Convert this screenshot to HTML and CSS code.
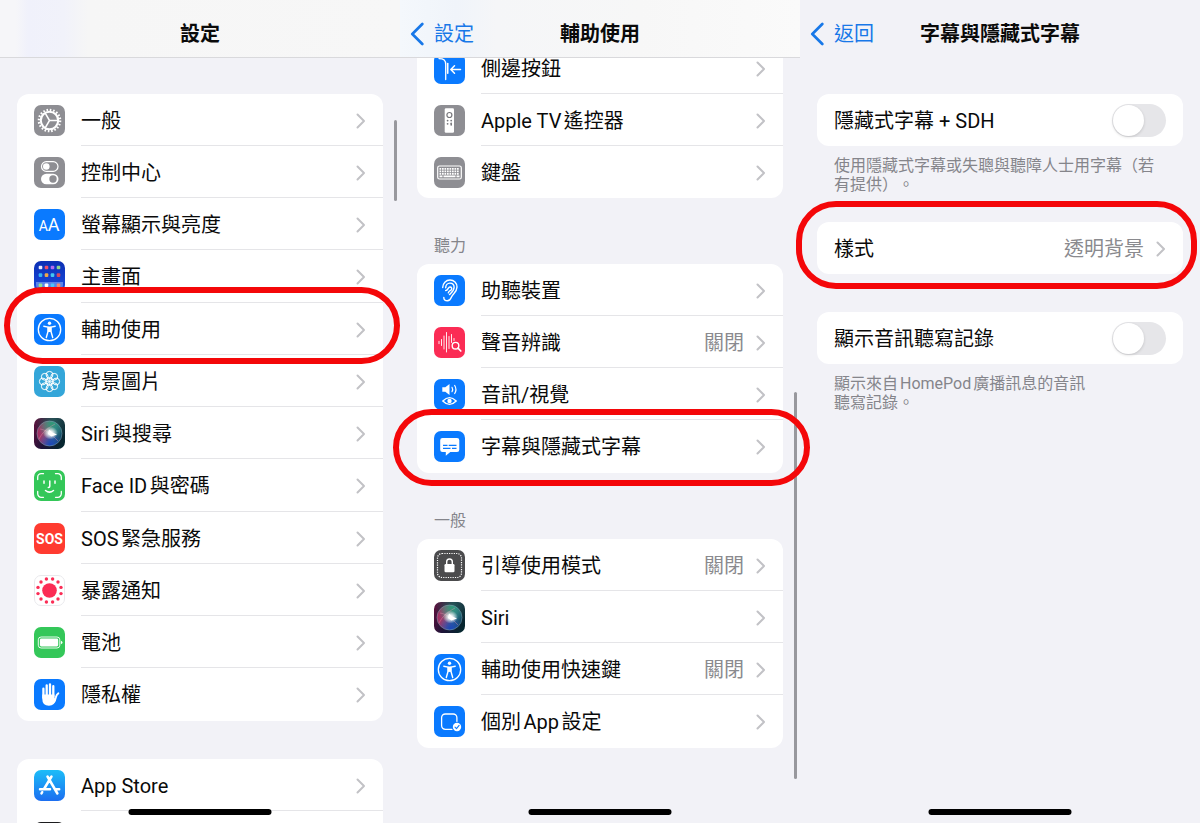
FILE: index.html
```html
<!DOCTYPE html>
<html lang="zh-Hant">
<head>
<meta charset="utf-8">
<meta name="viewport" content="width=device-width, initial-scale=1">
<title>設定</title>
<link rel="stylesheet" href="styles.css">
</head>
<body>
<svg class="sprite" aria-hidden="true">
  <defs>
    <linearGradient id="g-home" x1="0" y1="0" x2="0" y2="1"><stop offset="0" stop-color="#0b2fb4"/><stop offset="1" stop-color="#1b4be0"/></linearGradient>
    <linearGradient id="g-store" x1="0" y1="0" x2="0" y2="1"><stop offset="0" stop-color="#1cbdf8"/><stop offset="1" stop-color="#1c6ef0"/></linearGradient>
    <linearGradient id="g-siri" x1="0" y1="0.2" x2="1" y2="0.6"><stop offset="0" stop-color="#5a0f3c"/><stop offset="0.5" stop-color="#1c1438"/><stop offset="1" stop-color="#06262f"/></linearGradient>
    <linearGradient id="g-orb" x1="0" y1="0.4" x2="1" y2="0.6"><stop offset="0" stop-color="#c8306a"/><stop offset="0.4" stop-color="#b0608c"/><stop offset="0.65" stop-color="#3a80b0"/><stop offset="1" stop-color="#12506e"/></linearGradient>
    <radialGradient id="g-green" cx="0.6" cy="0.1" r="0.6"><stop offset="0" stop-color="#2f9a78"/><stop offset="1" stop-color="#2f9a78" stop-opacity="0"/></radialGradient>
    <radialGradient id="g-blue" cx="0.55" cy="0.95" r="0.5"><stop offset="0" stop-color="#1c46b8"/><stop offset="1" stop-color="#1c46b8" stop-opacity="0"/></radialGradient>
    <radialGradient id="g-glow"><stop offset="0" stop-color="#fff"/><stop offset="0.35" stop-color="#fff" stop-opacity="0.8"/><stop offset="1" stop-color="#fff" stop-opacity="0"/></radialGradient>
  </defs>
  <symbol id="chevron" viewBox="0 0 10 16"><path d="M1.500 1.500 8 8l-6.500 6.500" fill="none" stroke="#c2c2c6" stroke-width="2" stroke-linecap="round" stroke-linejoin="round"/></symbol>
  <symbol id="back" viewBox="0 0 14 24"><path d="M12.300 2 2.300 12l10 10" fill="none" stroke="#1878e8" stroke-width="2.700" stroke-linecap="round" stroke-linejoin="round"/></symbol>
  <symbol id="access" viewBox="0 0 31 31">
    <rect width="31" height="31" rx="7" fill="#0a7aff"/>
    <circle cx="15.500" cy="15.500" r="11.200" fill="none" stroke="#fff" stroke-width="1.300"/>
    <circle cx="15.500" cy="9.200" r="1.700" fill="#fff"/>
    <path d="M9.800 12.200 14 13.100v4.400l-1.700 6M21.200 12.200 17 13.100v4.400l1.700 6" fill="none" stroke="#fff" stroke-width="1.400" stroke-linecap="round" stroke-linejoin="round"/>
    <path d="M13.700 12.500h3.600v5.400h-3.600z" fill="#fff"/>
  </symbol>
  <symbol id="siri" viewBox="0 0 31 31">
    <rect width="31" height="31" rx="7" fill="url(#g-siri)"/>
    <rect width="31" height="31" rx="7" fill="url(#g-green)" opacity="0.500"/>
    <circle cx="15.500" cy="15.500" r="12.500" fill="url(#g-orb)" opacity="0.750"/>
    <circle cx="15.500" cy="15.500" r="12.500" fill="url(#g-green)"/>
    <circle cx="15.500" cy="15.500" r="12.500" fill="url(#g-blue)"/>
    <circle cx="15.500" cy="15.500" r="12.500" fill="none" stroke="#7fa8b8" stroke-width="0.700" opacity="0.700"/>
    <path d="M5 21C8 15 12 11 21 6M6 11c6 1 10 4 18 12" fill="none" stroke="#ff9ab8" stroke-width="1" opacity="0.350"/>
    <ellipse cx="16.500" cy="15" rx="7.500" ry="6.500" fill="url(#g-glow)"/>
    <path d="M15 11.500 18.500 14.500l4.500 2-5.500 2-3.500-2.500z" fill="#fff"/>
  </symbol>
</svg>

<main class="board">
  <section class="screen" aria-label="設定">
    <header class="bar bar-root"><h1 class="bar-title">設定</h1></header>
    <div class="content">
      <ul class="card">
        <li class="row">
          <svg class="icon" viewBox="0 0 31 31"><rect width="31" height="31" rx="7" fill="#8e8e93"/><g fill="none" stroke="#fff"><circle cx="15.500" cy="15.500" r="8.700" stroke-width="2.100"/><circle cx="15.500" cy="15.500" r="10.700" stroke-width="2.200" stroke-dasharray="1.600 1.760"/><path d="M15.500 15.500h8.500M15.500 15.500l-4.300-7.400M15.500 15.500l-4.300 7.400" stroke-width="1.500"/></g></svg>
          <a class="row-body" href="#"><span class="label">一般</span><svg class="chevron"><use href="#chevron"/></svg></a>
        </li>
        <li class="row">
          <svg class="icon" viewBox="0 0 31 31"><rect width="31" height="31" rx="7" fill="#8e8e93"/><rect x="7.500" y="4.700" width="16.500" height="9.600" rx="4.800" fill="none" stroke="#fff" stroke-width="1.200"/><circle cx="12.300" cy="9.500" r="3.300" fill="#fff"/><rect x="7" y="16.700" width="17.500" height="10.600" rx="5.300" fill="#fff"/><circle cx="19" cy="22" r="3.700" fill="#8e8e93"/></svg>
          <a class="row-body" href="#"><span class="label">控制中心</span><svg class="chevron"><use href="#chevron"/></svg></a>
        </li>
        <li class="row">
          <svg class="icon" viewBox="0 0 31 31"><rect width="31" height="31" rx="7" fill="#0a7aff"/><text class="glyph glyph-small" x="4.700" y="22">A</text><text class="glyph glyph-large" x="13.700" y="22">A</text></svg>
          <a class="row-body" href="#"><span class="label">螢幕顯示與亮度</span><svg class="chevron"><use href="#chevron"/></svg></a>
        </li>
        <li class="row">
          <svg class="icon" viewBox="0 0 31 31"><rect width="31" height="31" rx="7" fill="url(#g-home)"/><path d="M2 21h27v3a5 5 0 0 1-5 5H7a5 5 0 0 1-5-5z" fill="#5b83e8"/><g><rect x="4.700" y="4.700" width="3.600" height="3.600" rx="1" fill="#e8ecff"/><rect x="10.700" y="4.700" width="3.600" height="3.600" rx="1" fill="#f0506a"/><rect x="16.700" y="4.700" width="3.600" height="3.600" rx="1" fill="#b56cf0"/><rect x="22.700" y="4.700" width="3.600" height="3.600" rx="1" fill="#8fd68c"/><rect x="4.700" y="12.300" width="3.600" height="3.600" rx="1" fill="#35b4f5"/><rect x="10.700" y="12.300" width="3.600" height="3.600" rx="1" fill="#f0a848"/><rect x="16.700" y="12.300" width="3.600" height="3.600" rx="1" fill="#42c8f0"/><rect x="22.700" y="12.300" width="3.600" height="3.600" rx="1" fill="#d84860"/><rect x="4.700" y="22.500" width="3.600" height="3.600" rx="1" fill="#8fe09a"/><rect x="10.700" y="22.500" width="3.600" height="3.600" rx="1" fill="#fff"/><rect x="16.700" y="22.500" width="3.600" height="3.600" rx="1" fill="#4fc3f7"/><rect x="22.700" y="22.500" width="3.600" height="3.600" rx="1" fill="#f58a70"/></g></svg>
          <a class="row-body" href="#"><span class="label">主畫面</span><svg class="chevron"><use href="#chevron"/></svg></a>
        </li>
        <li class="row">
          <svg class="icon"><use href="#access"/></svg>
          <a class="row-body" href="#"><span class="label">輔助使用</span><svg class="chevron"><use href="#chevron"/></svg></a>
          <span class="ring ring-access"></span>
        </li>
        <li class="row">
          <svg class="icon" viewBox="0 0 31 31"><rect width="31" height="31" rx="7" fill="#34a6d9"/><g fill="none" stroke="#fff" stroke-width="1"><circle cx="15.500" cy="8.800" r="3.400"/><circle cx="20.240" cy="10.760" r="3.400"/><circle cx="22.200" cy="15.500" r="3.400"/><circle cx="20.240" cy="20.240" r="3.400"/><circle cx="15.500" cy="22.200" r="3.400"/><circle cx="10.760" cy="20.240" r="3.400"/><circle cx="8.800" cy="15.500" r="3.400"/><circle cx="10.760" cy="10.760" r="3.400"/><circle cx="15.500" cy="15.500" r="3"/><path d="M15.500 11v9M11 15.500h9M12.300 12.300l6.400 6.400M18.700 12.300l-6.400 6.400" stroke-width="0.700"/></g></svg>
          <a class="row-body" href="#"><span class="label">背景圖片</span><svg class="chevron"><use href="#chevron"/></svg></a>
        </li>
        <li class="row">
          <svg class="icon"><use href="#siri"/></svg>
          <a class="row-body" href="#"><span class="label">Siri與搜尋</span><svg class="chevron"><use href="#chevron"/></svg></a>
        </li>
        <li class="row">
          <svg class="icon" viewBox="0 0 31 31"><rect width="31" height="31" rx="7" fill="#34c759"/><g fill="none" stroke="#fff" stroke-width="1.300" stroke-linecap="round"><path d="M3.700 9.500V7.200a3.500 3.500 0 0 1 3.500-3.500h2.300M21.500 3.700h2.300a3.500 3.500 0 0 1 3.500 3.500v2.300M27.300 21.500v2.300a3.500 3.500 0 0 1-3.500 3.500h-2.300M9.500 27.300H7.200a3.500 3.500 0 0 1-3.500-3.500v-2.300"/><path d="M10 11v2.300M21 11v2.300M15.800 11v5.300q0 1.200-1.500 1.200M11.500 20.500q4 3.300 8 0" stroke-width="1.500"/></g></svg>
          <a class="row-body" href="#"><span class="label">Face ID與密碼</span><svg class="chevron"><use href="#chevron"/></svg></a>
        </li>
        <li class="row">
          <svg class="icon" viewBox="0 0 31 31"><rect width="31" height="31" rx="7" fill="#ff3b30"/><text class="glyph glyph-sos" x="15.500" y="20.500">SOS</text></svg>
          <a class="row-body" href="#"><span class="label">SOS緊急服務</span><svg class="chevron"><use href="#chevron"/></svg></a>
        </li>
        <li class="row">
          <svg class="icon" viewBox="0 0 31 31"><rect x="0.500" y="0.500" width="30" height="30" rx="6.500" fill="#fff" stroke="#e9e9ec"/><circle cx="15.500" cy="15.500" r="7.300" fill="#fb2c55"/><g fill="#fb2c55"><circle cx="27" cy="18.600" r="1.700"/><circle cx="24" cy="24" r="1.700"/><circle cx="18.600" cy="27" r="1.700"/><circle cx="12.400" cy="27" r="1.700"/><circle cx="7" cy="24" r="1.700"/><circle cx="4" cy="18.600" r="1.700"/><circle cx="4" cy="12.400" r="1.700"/><circle cx="7" cy="7" r="1.700"/><circle cx="12.400" cy="4" r="1.700"/><circle cx="18.600" cy="4" r="1.700"/><circle cx="24" cy="7" r="1.700"/><circle cx="27" cy="12.400" r="1.700"/></g></svg>
          <a class="row-body" href="#"><span class="label">暴露通知</span><svg class="chevron"><use href="#chevron"/></svg></a>
        </li>
        <li class="row">
          <svg class="icon" viewBox="0 0 31 31"><rect width="31" height="31" rx="7" fill="#34c759"/><rect x="4.300" y="10" width="21.500" height="11" rx="2.800" fill="none" stroke="#fff" stroke-width="0.900"/><rect x="5.900" y="11.600" width="18.300" height="7.800" rx="1.400" fill="#fff"/><path d="M26.900 13.700q1.600.5 1.600 1.800t-1.600 1.800z" fill="#fff"/></svg>
          <a class="row-body" href="#"><span class="label">電池</span><svg class="chevron"><use href="#chevron"/></svg></a>
        </li>
        <li class="row">
          <svg class="icon" viewBox="0 0 31 31"><rect width="31" height="31" rx="7" fill="#0a7aff"/><g fill="none" stroke="#fff" stroke-width="2.300" stroke-linecap="round"><path d="M9.400 9.700v9M12.700 6.300V18M16 5.500V18M19.300 7.200V18"/><path d="M24.300 14.300q-1.800 1-2.600 4.500-.7 2.600-2.200 4.200" stroke-width="2"/></g><path d="M8.250 15.500h12.200v3.800l2 .5q-1.700 7-7.500 7-6.700 0-6.700-7.300z" fill="#fff"/></svg>
          <a class="row-body" href="#"><span class="label">隱私權</span><svg class="chevron"><use href="#chevron"/></svg></a>
        </li>
      </ul>
      <ul class="card">
        <li class="row">
          <svg class="icon" viewBox="0 0 31 31"><rect width="31" height="31" rx="7" fill="url(#g-store)"/><g fill="none" stroke="#fff" stroke-width="2.500" stroke-linecap="round"><path d="M17.500 6.500 10 19M13.500 6.500l9.900 17M6 19.300h10M22 19.300h3.200M8.200 22.200l-.7 1.200"/></g></svg>
          <a class="row-body" href="#"><span class="label">App Store</span><svg class="chevron"><use href="#chevron"/></svg></a>
        </li>
        <li class="row">
          <svg class="icon" viewBox="0 0 31 31"><rect width="31" height="31" rx="7" fill="#1c1c1e"/></svg>
          <span class="row-body"></span>
        </li>
      </ul>
    </div>
    <span class="scrollbar scrollbar-top"></span>
    <span class="home-indicator"></span>
  </section>

  <section class="screen" aria-label="輔助使用">
    <header class="bar bar-detail"><a class="back" href="#"><svg class="back-icon"><use href="#back"/></svg>設定</a><h1 class="bar-title">輔助使用</h1></header>
    <div class="content content-scrolled">
      <ul class="card">
        <li class="row">
          <svg class="icon" viewBox="0 0 31 31"><rect width="31" height="31" rx="7" fill="#0a7aff"/><g fill="none" stroke="#fff" stroke-width="1.300" stroke-linecap="round" stroke-linejoin="round"><path d="M5 5.600c5 0 6.700 1.500 6.700 6v15"/><path d="M13.700 10.500v9.700" stroke-width="1.600"/><path d="M26.500 16.500H17M20.500 12.800l-3.700 3.700 3.700 3.700" stroke-width="1.500"/></g></svg>
          <a class="row-body" href="#"><span class="label">側邊按鈕</span><svg class="chevron"><use href="#chevron"/></svg></a>
        </li>
        <li class="row">
          <svg class="icon" viewBox="0 0 31 31"><rect width="31" height="31" rx="7" fill="#8e8e93"/><rect x="10.700" y="3.300" width="9.300" height="24.400" rx="1.300" fill="#fff"/><circle cx="15.400" cy="10" r="2.500" fill="none" stroke="#77777c" stroke-width="1.200"/><g fill="#77777c"><circle cx="13.600" cy="15.600" r="0.900"/><circle cx="17.200" cy="15.600" r="0.900"/><circle cx="13.600" cy="18.800" r="0.900"/><rect x="16.400" y="17.400" width="1.600" height="3.400" rx="0.800"/></g></svg>
          <a class="row-body" href="#"><span class="label">Apple TV遙控器</span><svg class="chevron"><use href="#chevron"/></svg></a>
        </li>
        <li class="row">
          <svg class="icon" viewBox="0 0 31 31"><rect width="31" height="31" rx="7" fill="#8e8e93"/><rect x="3.700" y="9" width="23.600" height="13" rx="1.800" fill="none" stroke="#fff" stroke-width="1.200"/><g stroke="#fff" stroke-width="1.700" fill="none"><path d="M5.500 11.900h20M5.500 14.400h20M5.500 16.900h20" stroke-dasharray="1.700 0.800"/><path d="M5.500 19.400h3M9.500 19.400h12M22.500 19.400h3"/></g></svg>
          <a class="row-body" href="#"><span class="label">鍵盤</span><svg class="chevron"><use href="#chevron"/></svg></a>
        </li>
      </ul>
      <h2 class="section-title">聽力</h2>
      <ul class="card">
        <li class="row">
          <svg class="icon" viewBox="0 0 31 31"><rect width="31" height="31" rx="7" fill="#0a7aff"/><g fill="none" stroke="#fff" stroke-width="1.400" stroke-linecap="round" stroke-linejoin="round"><path d="M8.700 12.500C8.700 8.300 12 5 16 5s7 3.100 7 7c0 5-4.200 6.800-5.500 10-.9 2.300-2 3.800-4 3.800-2.300 0-3.700-1.500-3.700-3.300"/><path d="M11.700 12.700c0-2.600 1.800-4.600 4.200-4.600s4.200 1.700 4.200 4.200c0 3.500-2.800 5.300-4.600 7.200"/><path d="M11.700 15.500c2.500.2 2.200-3.500 4.300-3.500 1.700 0 2.200 1.600 1.300 2.800-.8 1.100-2.500 1-3 3"/></g></svg>
          <a class="row-body" href="#"><span class="label">助聽裝置</span><svg class="chevron"><use href="#chevron"/></svg></a>
        </li>
        <li class="row">
          <svg class="icon" viewBox="0 0 31 31"><rect width="31" height="31" rx="7" fill="#fb2c55"/><g fill="none" stroke="#fff" stroke-width="0.900" stroke-linecap="round"><path d="M5 14.300v2.400M7.500 12.500v6M10 9v13M12.500 5.500v19.500M15 9.500v12M17.500 7.500v8M20 11.500v2"/><circle cx="21.500" cy="18.700" r="3.300" stroke-width="1.400"/><path d="m24 21.200 2.800 2.800" stroke-width="1.700"/></g></svg>
          <a class="row-body" href="#"><span class="label">聲音辨識</span><span class="value">關閉</span><svg class="chevron"><use href="#chevron"/></svg></a>
        </li>
        <li class="row">
          <svg class="icon" viewBox="0 0 31 31"><rect width="31" height="31" rx="7" fill="#0a7aff"/><path d="M8.300 8.300h3L15.500 5v11l-4.200-3.300h-3z" fill="#fff"/><g fill="none" stroke="#fff" stroke-width="1.200" stroke-linecap="round"><path d="M18 8.300q1.300 2.200 0 4.400M20.700 6.500q2.500 4 0 8"/><path d="M8.800 22q6.700-6.800 13.400 0-6.700 6.800-13.400 0z" stroke-width="1.400"/></g><circle cx="15.500" cy="22" r="2.200" fill="#fff"/></svg>
          <a class="row-body" href="#"><span class="label">音訊/視覺</span><svg class="chevron"><use href="#chevron"/></svg></a>
        </li>
        <li class="row">
          <svg class="icon" viewBox="0 0 31 31"><rect width="31" height="31" rx="7" fill="#0a7aff"/><path d="M8.500 7H23a2.300 2.300 0 0 1 2.300 2.300v9.500A2.300 2.300 0 0 1 23 21.100h-6.700l-4.500 3.700v-3.700H8.500a2.300 2.300 0 0 1-2.300-2.300V9.300A2.300 2.300 0 0 1 8.500 7z" fill="#fff"/><path d="M9 14.300h4.500M14.700 14.300h7.800M9 17.300h7.500M18 17.300h4.500" stroke="#0a7aff" stroke-width="1.200"/></svg>
          <a class="row-body" href="#"><span class="label">字幕與隱藏式字幕</span><svg class="chevron"><use href="#chevron"/></svg></a>
          <span class="ring ring-captions"></span>
        </li>
      </ul>
      <h2 class="section-title">一般</h2>
      <ul class="card">
        <li class="row">
          <svg class="icon" viewBox="0 0 31 31"><rect width="31" height="31" rx="7" fill="#4b4b4d"/><rect x="3.500" y="3.500" width="24" height="24" rx="4.500" fill="none" stroke="#fff" stroke-width="1.200" stroke-dasharray="1.200 1.150"/><rect x="10.500" y="14" width="10" height="8.300" rx="1.300" fill="#fff"/><path d="M12.700 14.500v-2.700a2.800 2.800 0 0 1 5.600 0v2.700" fill="none" stroke="#fff" stroke-width="1.400"/></svg>
          <a class="row-body" href="#"><span class="label">引導使用模式</span><span class="value">關閉</span><svg class="chevron"><use href="#chevron"/></svg></a>
        </li>
        <li class="row">
          <svg class="icon"><use href="#siri"/></svg>
          <a class="row-body" href="#"><span class="label">Siri</span><svg class="chevron"><use href="#chevron"/></svg></a>
        </li>
        <li class="row">
          <svg class="icon"><use href="#access"/></svg>
          <a class="row-body" href="#"><span class="label">輔助使用快速鍵</span><span class="value">關閉</span><svg class="chevron"><use href="#chevron"/></svg></a>
        </li>
        <li class="row">
          <svg class="icon" viewBox="0 0 31 31"><rect width="31" height="31" rx="7" fill="#0a7aff"/><rect x="7.600" y="8" width="15.300" height="15.300" rx="3.700" fill="none" stroke="#fff" stroke-width="1.300"/><circle cx="23" cy="21" r="5.200" fill="#0a7aff"/><circle cx="23" cy="21" r="4.200" fill="#fff"/><path d="m21 21.200 1.500 1.500 2.600-3.300" fill="none" stroke="#0a7aff" stroke-width="1.100" stroke-linecap="round" stroke-linejoin="round"/></svg>
          <a class="row-body" href="#"><span class="label">個別App設定</span><svg class="chevron"><use href="#chevron"/></svg></a>
        </li>
      </ul>
    </div>
    <span class="scrollbar scrollbar-bottom"></span>
    <span class="home-indicator"></span>
  </section>

  <section class="screen" aria-label="字幕與隱藏式字幕">
    <header class="bar bar-plain"><a class="back" href="#"><svg class="back-icon"><use href="#back"/></svg>返回</a><h1 class="bar-title">字幕與隱藏式字幕</h1></header>
    <div class="content">
      <div class="card row">
        <label class="row-body" for="sdh"><span class="label">隱藏式字幕 + SDH</span><input class="switch" type="checkbox" role="switch" id="sdh"></label>
      </div>
      <p class="note">使用隱藏式字幕或失聰與聽障人士用字幕（若<br>有提供）。</p>
      <div class="card row">
        <a class="row-body" href="#"><span class="label">樣式</span><span class="value">透明背景</span><svg class="chevron"><use href="#chevron"/></svg></a>
        <span class="ring ring-style"></span>
      </div>
      <div class="card row">
        <label class="row-body" for="transcript"><span class="label">顯示音訊聽寫記錄</span><input class="switch" type="checkbox" role="switch" id="transcript"></label>
      </div>
      <p class="note">顯示來自HomePod廣播訊息的音訊<br>聽寫記錄。</p>
    </div>
    <span class="home-indicator"></span>
  </section>
</main>
</body>
</html>
```

FILE: styles.css
```css
* {
  box-sizing: border-box;
}

body {
  margin: 0;
  background: #f2f2f7;
  color: #0a0a0a;
  font-family: Roboto, "Noto Sans CJK TC", sans-serif;
  font-size: 20px;
  line-height: 28px;
  text-autospace: normal;
  text-spacing-trim: space-all;
}

.sprite {
  position: absolute;
  width: 0;
  height: 0;
}

.board {
  display: grid;
  grid-template-columns: repeat(3, minmax(0, 1fr));
  grid-template-rows: minmax(0, 1fr);
  height: 100vh;
  overflow: hidden;
}

.screen {
  position: relative;
  min-width: 0;
}

/* Navigation bar */

.bar {
  position: relative;
  z-index: 2;
  display: grid;
  grid-template-columns: 1fr auto 1fr;
  align-items: center;
  height: 58px;
  padding: 10px 10px 0;
  border-bottom: 1px solid #d9d9dc;
}

.bar-root {
  background: linear-gradient(90deg, #f6f6f9 4%, #f0f1fb 7%, #f1f2fa 16%, #f6f6f6 22%, #f7f7f7);
}

.bar-detail {
  background: linear-gradient(90deg, #f4f8fc, #f0f4fa 14%, #f5f6f8 24%, #f7f7f7 60%, #fafafa);
}

.bar-plain {
  border-color: transparent;
}

.bar-title {
  grid-column: 2;
  margin: 0;
  font-size: 20px;
  font-weight: 700;
}

.back {
  display: flex;
  align-items: center;
  gap: 10px;
  color: #1878e8;
  text-decoration: none;
}

.back-icon {
  width: 14px;
  height: 24px;
}

/* Grouped lists */

.content {
  display: flex;
  flex-direction: column;
  gap: 38px;
  padding: 36px 17px 0;
}

.content-scrolled {
  gap: 0;
  margin-top: -16px;
  padding-top: 0;
}

.card {
  margin: 0;
  padding: 0;
  list-style: none;
  background: #fff;
  border-radius: 12px;
}

.row {
  position: relative;
  display: flex;
  align-items: center;
  gap: 16px;
  min-height: 52px;
  padding-left: 17px;
}

.card > .row:nth-child(4n) {
  min-height: 53px;
}

.row-body {
  display: flex;
  flex: 1;
  align-self: stretch;
  align-items: center;
  gap: 12px;
  padding: 2px 17px 0 0;
  border-bottom: 1px solid #e5e5e8;
  color: inherit;
  text-decoration: none;
}

.row:last-child .row-body,
.card.row .row-body {
  border-bottom-color: transparent;
}

.icon {
  flex: none;
  width: 31px;
  height: 31px;
}

.label {
  flex: 1;
}

.value {
  color: #8a8a8e;
}

.chevron {
  flex: none;
  width: 10px;
  height: 16px;
}

.section-title {
  margin: 0;
  padding: 38px 17px 8px;
  color: #85858b;
  font-size: 16px;
  font-weight: 400;
  line-height: 20px;
}

.note {
  margin: -28px 0 -10px;
  padding: 0 17px;
  color: #85858b;
  font-size: 16px;
  line-height: 19px;
}

.glyph {
  fill: #fff;
  font-family: Roboto, sans-serif;
}

.glyph-small {
  font-size: 14px;
}

.glyph-large {
  font-size: 18px;
}

.glyph-sos {
  font-size: 14px;
  font-weight: 700;
  text-anchor: middle;
}

/* Switch */

.switch {
  position: relative;
  flex: none;
  width: 54px;
  height: 33px;
  margin: 0;
  appearance: none;
  background: #e6e6e9;
  border-radius: 17px;
}

.switch::before {
  content: "";
  position: absolute;
  top: 1px;
  left: 1px;
  width: 31px;
  height: 31px;
  background: #fff;
  border-radius: 50%;
  box-shadow: 0 1px 3px rgba(0, 0, 0, 0.16);
}

.switch:checked {
  background: #34c759;
}

.switch:checked::before {
  left: 22px;
}

/* Overlays */

.ring {
  position: absolute;
  z-index: 3;
  border: 6px solid #f40709;
  border-radius: 40px;
  pointer-events: none;
}

.ring-access {
  inset: -16px -17px -9px -13px;
}

.ring-captions {
  inset: -11px -27px -13px -24px;
}

.ring-style {
  inset: -21px -14px -15px -21px;
}

.scrollbar {
  position: absolute;
  z-index: 1;
  right: 3px;
  width: 3px;
  background: #98989d;
  border-radius: 2px;
}

.scrollbar-top {
  top: 120px;
  height: 81px;
}

.scrollbar-bottom {
  top: 392px;
  height: 387px;
}

.home-indicator {
  position: absolute;
  z-index: 1;
  bottom: 8px;
  left: 50%;
  width: 143px;
  height: 6px;
  background: #000;
  border-radius: 3px;
  transform: translateX(-50%);
}
```
